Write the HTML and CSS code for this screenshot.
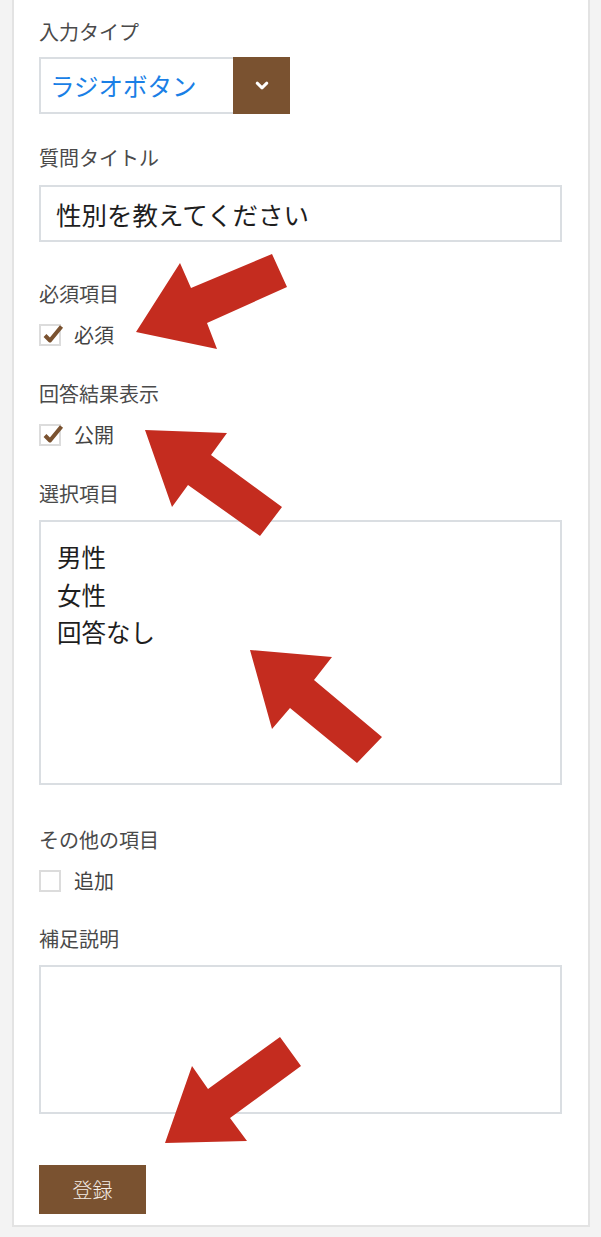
FILE: index.html
```html
<!DOCTYPE html>
<html lang="ja">
<head>
<meta charset="utf-8">
<title>質問編集</title>
<link rel="stylesheet" href="styles.css">
</head>
<body>
<div class="page">
  <form class="card">
    <div class="field first">
      <div class="label">入力タイプ</div>
      <div class="select">
        <div class="select-value">ラジオボタン</div>
        <div class="select-btn">
          <svg width="14" height="10" viewBox="0 0 14 10"><polyline points="2.2,2.2 7,6.8 11.8,2.2" fill="none" stroke="#fff" stroke-width="3" stroke-linecap="round" stroke-linejoin="round"/></svg>
        </div>
      </div>
    </div>

    <div class="field f2">
      <div class="label">質問タイトル</div>
      <div class="input">性別を教えてください</div>
    </div>

    <div class="field f3">
      <div class="label">必須項目</div>
      <div class="check-row">
        <span class="box checked"><svg class="tick" width="24" height="20" viewBox="0 0 24 20"><path d="M6 10.5 L11 15.5 L22.5 1.5" fill="none" stroke="#7a5230" stroke-width="4" stroke-linejoin="round"/></svg></span>
        <span class="check-text">必須</span>
      </div>
    </div>

    <div class="field f4">
      <div class="label">回答結果表示</div>
      <div class="check-row">
        <span class="box checked"><svg class="tick" width="24" height="20" viewBox="0 0 24 20"><path d="M6 10.5 L11 15.5 L22.5 1.5" fill="none" stroke="#7a5230" stroke-width="4" stroke-linejoin="round"/></svg></span>
        <span class="check-text">公開</span>
      </div>
    </div>

    <div class="field f5">
      <div class="label">選択項目</div>
      <div class="textarea options">男性
女性
回答なし</div>
    </div>

    <div class="field f6">
      <div class="label">その他の項目</div>
      <div class="check-row">
        <span class="box"></span>
        <span class="check-text">追加</span>
      </div>
    </div>

    <div class="field f7">
      <div class="label">補足説明</div>
      <div class="textarea note"></div>
    </div>

    <div class="submit-row">
      <button type="button" class="submit">登録</button>
    </div>
  </form>

  <svg class="arrows" width="601" height="1237" viewBox="0 0 601 1237">
    <polygon points="136,332 180,263 191,288 272,254 287,287 207,323 217,349" />
    <polygon points="145,430 227,433 211,455 282,507 260,536 188,485 172,507" />
    <polygon points="250,650 332,657 314,680 382,737 357,763 290,708 272,729" />
    <polygon points="280,1037 301,1066 230,1118 247,1141 165,1143 192,1066 208,1089" />
  </svg>
</div>
</body>
</html>
```

FILE: styles.css
```css
html, body {
  margin: 0;
  padding: 0;
  background: #f3f3f3;
}

body {
  font-family: "Noto Sans CJK JP", "Noto Sans", "Liberation Sans", sans-serif;
  color: #222;
}

.page {
  position: relative;
  width: 601px;
  height: 1237px;
  overflow: hidden;
}

.card {
  box-sizing: border-box;
  width: 578px;
  margin-left: 12px;
  background: #fff;
  border: 2px solid #e3e3e3;
  border-top: none;
  padding: 18px 26px 11px 25px;
  display: flex;
  flex-direction: column;
}

.label {
  font-size: 20px;
  line-height: 28px;
  color: #4a4a4a;
  margin-bottom: 11px;
}

.field.f2 { margin-top: 30px; }
.field.f2 .label { margin-bottom: 13px; }
.field.f3 { margin-top: 38px; }
.field.f4 { margin-top: 31px; }
.field.f5 { margin-top: 31px; }
.field.f5 .label { margin-bottom: 12px; }
.field.f6 { margin-top: 41px; }
.field.f7 { margin-top: 30px; }
.field.f7 .label { margin-bottom: 12px; }

.field.f3 .label, .field.f4 .label, .field.f6 .label { margin-bottom: 13px; }

.select {
  display: flex;
  width: 251px;
  height: 57px;
  box-sizing: border-box;
  border: 2px solid #dadee2;
  border-right: none;
  background: #fff;
}

.select-value {
  flex: 1;
  font-size: 24.5px;
  line-height: 53px;
  color: #1a7fe6;
  padding-left: 9px;
}

.select-btn {
  width: 57px;
  margin: -2px 0;
  background: #7a5230;
  display: flex;
  align-items: center;
  justify-content: center;
}

.input {
  box-sizing: border-box;
  width: 523px;
  height: 57px;
  border: 2px solid #dadee2;
  font-size: 25.5px;
  line-height: 53px;
  padding-left: 15px;
  color: #1e1e1e;
}

.check-row {
  display: flex;
  align-items: center;
  height: 28px;
  gap: 13px;
}

.box {
  position: relative;
  box-sizing: border-box;
  width: 22px;
  height: 22px;
  border: 2px solid #dcdcdc;
  background: #fff;
  flex: none;
}

.tick {
  position: absolute;
  left: -2px;
  top: -1px;
  overflow: visible;
}

.check-text {
  font-size: 20px;
  line-height: 28px;
  color: #444;
}

.textarea {
  box-sizing: border-box;
  width: 523px;
  border: 2px solid #dadee2;
  background: #fff;
}

.options {
  height: 265px;
  white-space: pre-line;
  font-size: 24.5px;
  line-height: 37.5px;
  padding: 16px 16px;
  color: #1e1e1e;
}

.note {
  height: 149px;
}

.submit-row {
  margin-top: 51px;
}

.submit {
  width: 107px;
  height: 49px;
  border: none;
  background: #7a5230;
  color: #f4ede6;
  font-family: "Noto Sans CJK JP", sans-serif;
  font-size: 20px;
  font-weight: 300;
  padding: 0;
  display: block;
}

.arrows {
  position: absolute;
  left: 0;
  top: 0;
  pointer-events: none;
}

.arrows polygon {
  fill: #c42c1f;
}
```
